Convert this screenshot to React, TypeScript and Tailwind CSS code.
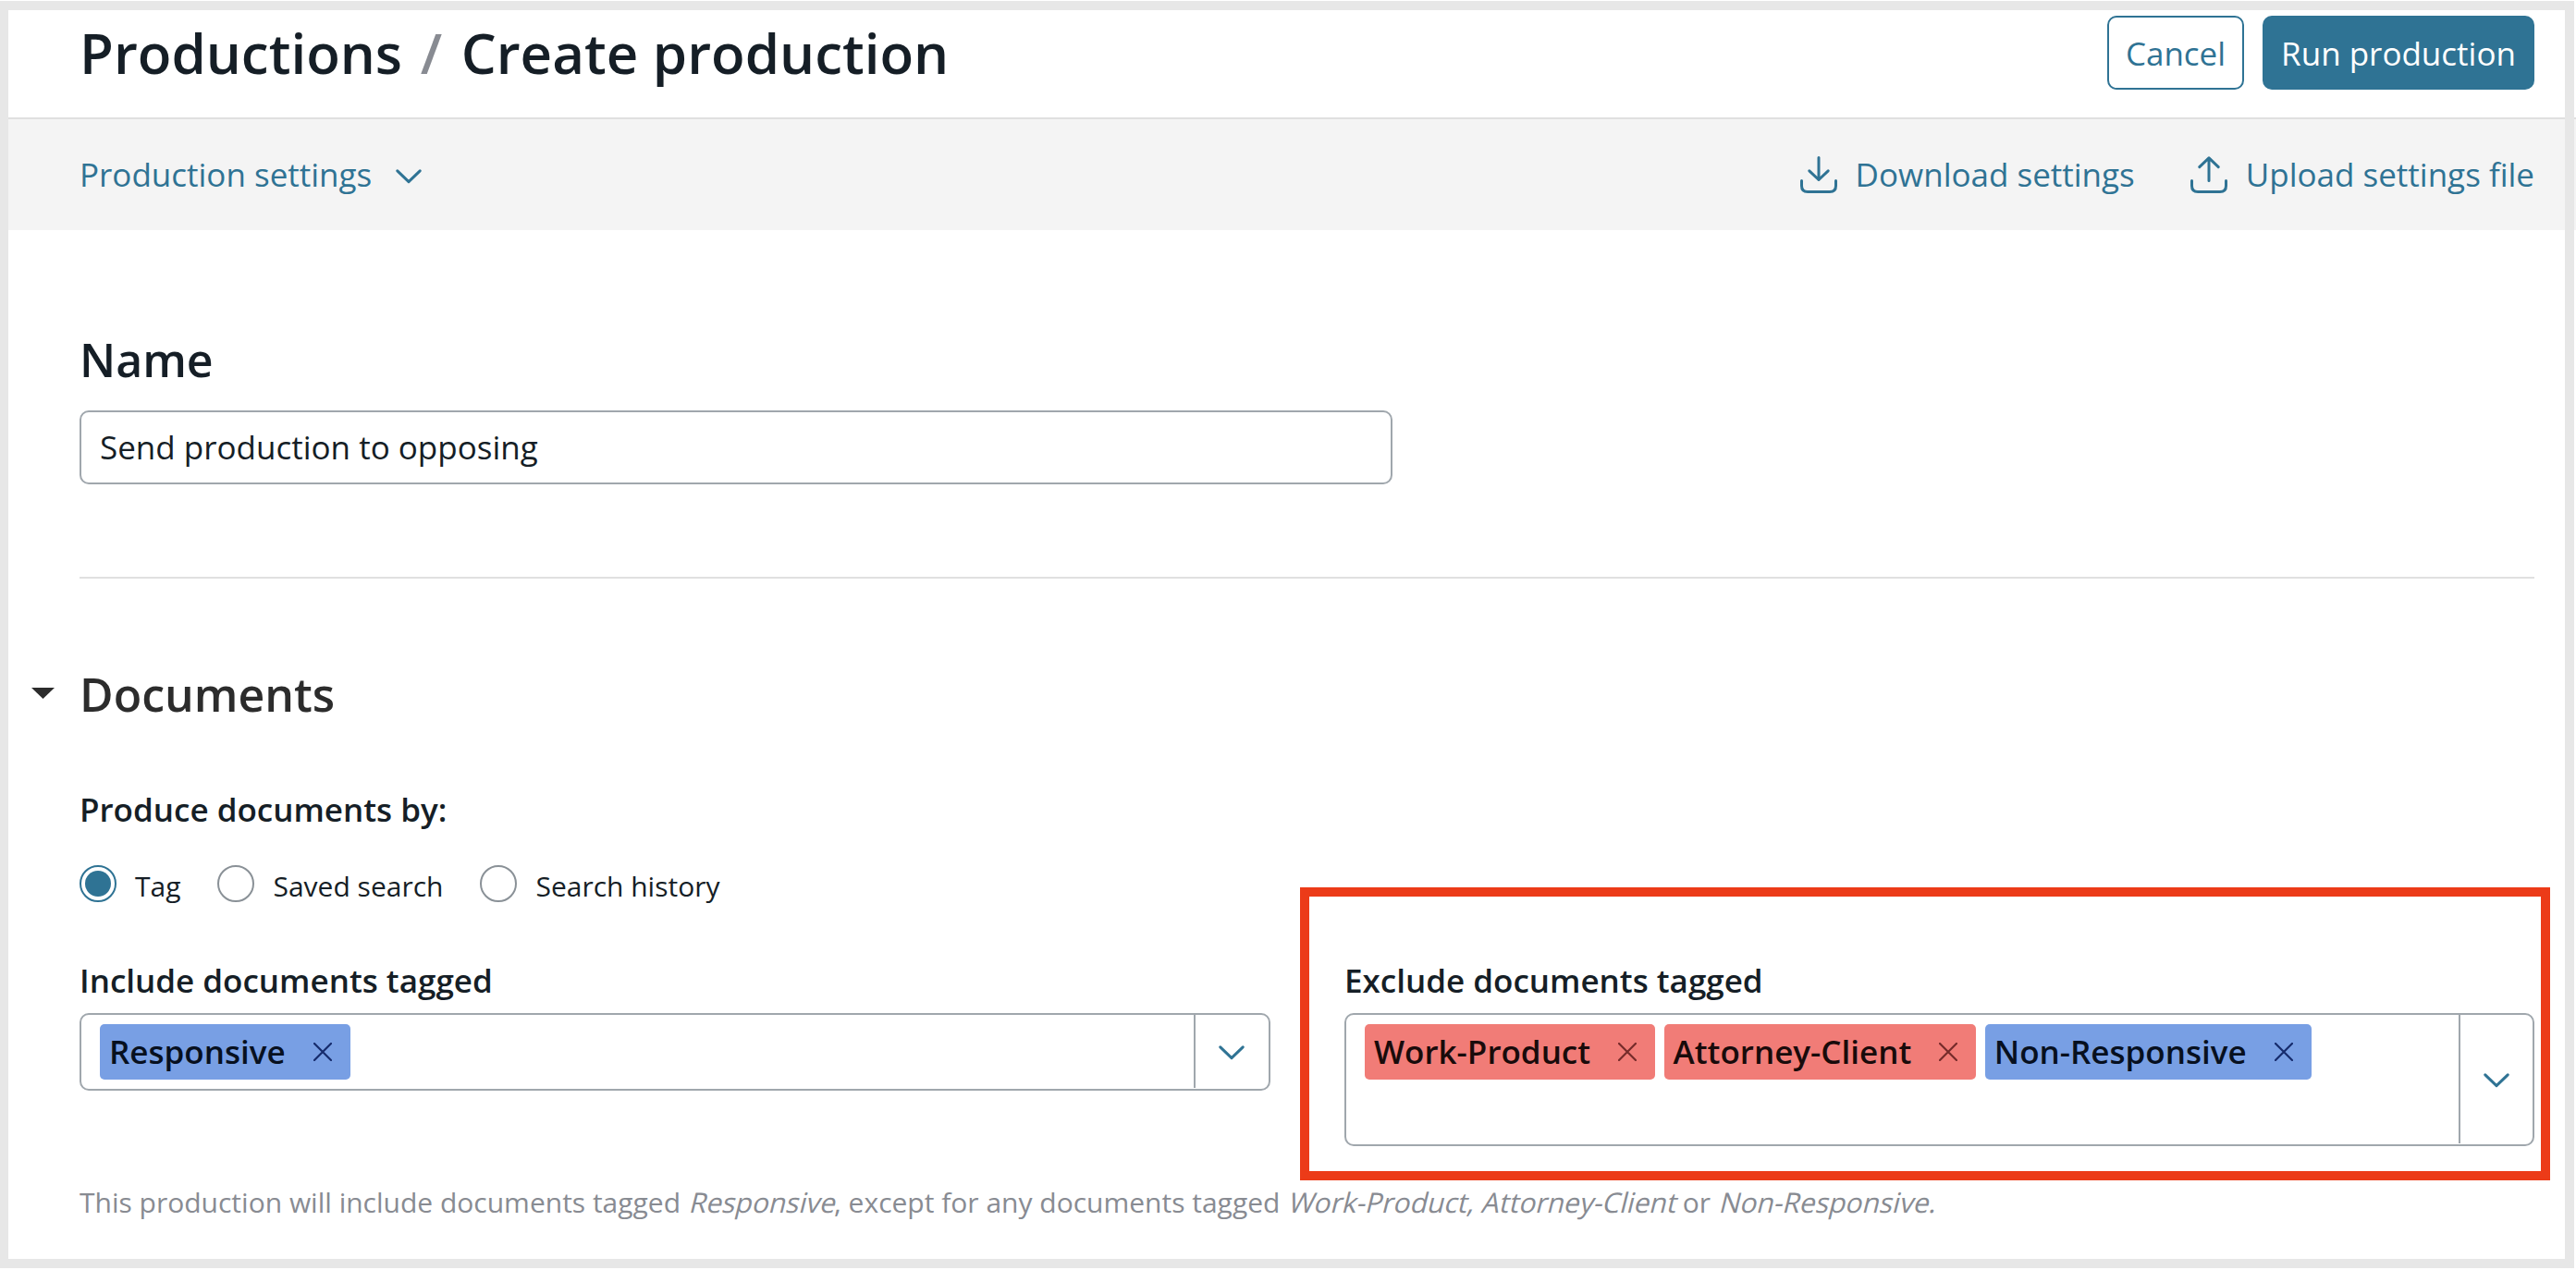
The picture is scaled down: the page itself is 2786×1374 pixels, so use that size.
import { useState } from 'react';
import clsx from 'clsx';

type Tag = { label: string; color: 'blue' | 'red' };

const includeTags: Tag[] = [{ label: 'Responsive', color: 'blue' }];

const excludeTags: Tag[] = [
  { label: 'Work-Product', color: 'red' },
  { label: 'Attorney-Client', color: 'red' },
  { label: 'Non-Responsive', color: 'blue' },
];

const sources = ['Tag', 'Saved search', 'Search history'];

function Chevron() {
  return (
    <svg className="w-7 h-4 shrink-0 mt-[3px]" viewBox="0 0 28 16" fill="none" stroke="#2f7394" strokeWidth="3" strokeLinecap="round" strokeLinejoin="round">
      <path d="M1.8 1.8 L14 13.6 L26.2 1.8" />
    </svg>
  );
}

function TrayIcon({ up = false }: { up?: boolean }) {
  return (
    <svg className="w-10 h-10 shrink-0" viewBox="0 0 40 40" fill="none" stroke="#2f7394" strokeWidth="3" strokeLinecap="round" strokeLinejoin="round">
      <path d="M1.5 26.5 V32 Q1.5 38.5 8 38.5 H32 Q38.5 38.5 38.5 32 V26.5" />
      {up ? <path d="M20 26.5 V1.8 M9.8 11.6 L20 1.8 L30.2 11.6" /> : <path d="M20 1.5 V25.5 M9.8 15.8 L20 25.5 L30.2 15.8" />}
    </svg>
  );
}

function TagChip({ tag }: { tag: Tag }) {
  const blue = tag.color === 'blue';
  return (
    <div
      className={clsx(
        'flex items-center h-[60px] pl-[10px] pr-5 gap-[30px] rounded-[5px] font-semibold',
        blue ? 'bg-[#789fe4] text-[#07101f]' : 'bg-[#f17c77] text-[#190b0b]'
      )}
    >
      <span className="whitespace-nowrap pt-px">{tag.label}</span>
      <svg className="w-5 h-5 shrink-0" viewBox="0 0 20 20" fill="none" stroke={blue ? '#162b6c' : '#752b2a'} strokeWidth="2.2" strokeLinecap="round">
        <path d="M1 1 L19 19 M19 1 L1 19" />
      </svg>
    </div>
  );
}

function TagSelect({ label, tags, tall = false }: { label: string; tags: Tag[]; tall?: boolean }) {
  return (
    <div>
      <h3 className="font-semibold h-12 leading-[50px] mb-3">{label}</h3>
      <div className={clsx('flex border-2 border-[#a0a7ad] rounded-[10px]', tall ? 'h-36' : 'h-[84px]')}>
        <div className="flex-1 flex flex-wrap content-start gap-[9.5px] pl-5 pt-[10px]">
          {tags.map(tag => (
            <TagChip key={tag.label} tag={tag} />
          ))}
        </div>
        <button
          className={clsx(
            'mb-px border-l-2 border-[#a0a7ad] flex items-center justify-center',
            tall ? 'w-20' : 'w-[81px] pr-px'
          )}
        >
          <Chevron />
        </button>
      </div>
    </div>
  );
}

// Slants the upright face around its baseline
function Slanted({ children }: { children: string }) {
  return <span className="inline-block whitespace-nowrap origin-[0_74%] -skew-x-14">{children}</span>;
}

export default function App() {
  const [name, setName] = useState('Send production to opposing');
  const [source, setSource] = useState('Tag');

  return (
    <div className="relative w-[2786px] h-[1374px] overflow-hidden bg-white text-[#151e26] text-[35px] font-['Open_Sans',sans-serif]">
      {/* Header */}
      <header className="h-[129px] pt-[17px] pl-[86px] pr-[45px] flex items-start justify-between border-b-2 border-[#e0e0e0]">
        <h1 className="text-[60px] leading-[80px] font-semibold whitespace-nowrap">
          Productions <span className="ml-1 mr-[5px] text-[#888b92]">/</span> Create production
        </h1>
        <div className="flex gap-5">
          <button className="w-[148px] h-20 pt-[2px] rounded-[10px] border-2 border-[#2f7394] text-[#2f7394]">Cancel</button>
          <button className="w-[294px] h-20 pt-[2px] rounded-[10px] bg-[#2f7394] text-white whitespace-nowrap">Run production</button>
        </div>
      </header>

      {/* Settings bar */}
      <div className="h-[120px] pl-[86px] pr-[45px] flex items-center justify-between bg-[#f4f4f4] text-[#2f7394]">
        <button className="flex items-center gap-[26px]">
          Production settings
          <Chevron />
        </button>
        <div className="flex items-center gap-[60px]">
          <button className="flex items-center gap-5">
            <TrayIcon />
            Download settings
          </button>
          <button className="flex items-center gap-5">
            <TrayIcon up />
            Upload settings file
          </button>
        </div>
      </div>

      <main className="pt-[110px] pl-[86px] pr-[45px]">
        <h2 className="text-[50px] leading-[60px] font-semibold mb-[25px]">Name</h2>
        <input
          className="block w-[1420px] h-20 px-5 pb-[2px] border-2 border-[#a0a7ad] rounded-[10px] outline-none"
          value={name}
          onChange={e => setName(e.target.value)}
        />

        <hr className="mt-[100px] border-t-2 border-[#e0e0e0]" />

        {/* Documents */}
        <div className="mt-[94px] -ml-[52px] flex items-center gap-[27px] text-[#2c2c2c]">
          <svg className="w-[25px] h-3" viewBox="0 0 25 12" fill="currentColor">
            <path d="M0 0 H25 L12.5 12 Z" />
          </svg>
          <h2 className="text-[50px] h-[60px] leading-[62px] font-semibold">Documents</h2>
        </div>

        <h3 className="mt-[71px] font-semibold h-12 leading-[50px]">Produce documents by:</h3>
        <div className="mt-[37px] h-10 flex items-center gap-10 text-[30px]">
          {sources.map(s => (
            <button key={s} className="flex items-center gap-5" onClick={() => setSource(s)}>
              <span
                className={clsx(
                  'w-10 h-10 rounded-full border-2 flex items-center justify-center',
                  s === source ? 'border-[#2f7394]' : 'border-[#8a9197]'
                )}
              >
                {s === source && <span className="w-7 h-7 rounded-full bg-[#2f7394]" />}
              </span>
              <span className="leading-[34px] pt-[6px]">{s}</span>
            </button>
          ))}
        </div>

        <div className="mt-[60px] h-[204px] grid grid-cols-[1288px_1287px] gap-20 items-start">
          <TagSelect label="Include documents tagged" tags={includeTags} />
          <TagSelect label="Exclude documents tagged" tags={excludeTags} tall />
        </div>

        <p className="mt-[37px] text-[30px] leading-[48px] text-[#888b92] whitespace-nowrap">
          This production will include documents tagged <Slanted>Responsive</Slanted>, except for any documents tagged{' '}
          <Slanted>Work-Product, Attorney-Client</Slanted> or <Slanted>Non-Responsive.</Slanted>
        </p>
      </main>

      {/* Highlight around the exclude box */}
      <div className="absolute left-[1406px] top-[960px] w-[1352px] h-[317px] border-10 border-[#ec3b18] pointer-events-none" />

      {/* Window frame */}
      <div className="absolute left-0 top-px w-[2784px] h-[1371px] border-10 border-l-9 border-[#e7e7e7] pointer-events-none" />
    </div>
  );
}
